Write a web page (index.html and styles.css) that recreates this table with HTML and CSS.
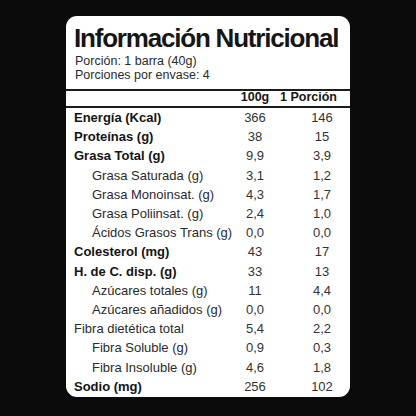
FILE: index.html
```html
<!DOCTYPE html>
<html lang="es">

<head>
    <meta charset="UTF-8">
    <meta name="viewport" content="width=device-width, initial-scale=1.0">
    <title>Información Nutricional</title>
    <link rel="stylesheet" href="styles.css">
</head>

<body>
    <div class="label">
        <div class="head">
            <h1>Información Nutricional</h1>
            <p>Porción: 1 barra (40g)</p>
            <p>Porciones por envase: 4</p>
        </div>
        <table class="facts">
            <colgroup>
                <col class="c-name">
                <col class="c-100">
                <col class="c-por">
            </colgroup>
            <thead>
                <tr>
                    <th></th>
                    <th>100g</th>
                    <th class="por"><span>1 Porción</span></th>
                </tr>
            </thead>
            <tbody>
                <tr class="main"><td>Energía (Kcal)</td><td>366</td><td>146</td></tr>
                <tr class="main"><td>Proteínas (g)</td><td>38</td><td>15</td></tr>
                <tr class="main"><td>Grasa Total (g)</td><td>9,9</td><td>3,9</td></tr>
                <tr class="sub"><td>Grasa Saturada (g)</td><td>3,1</td><td>1,2</td></tr>
                <tr class="sub"><td>Grasa Monoinsat. (g)</td><td>4,3</td><td>1,7</td></tr>
                <tr class="sub"><td>Grasa Poliinsat. (g)</td><td>2,4</td><td>1,0</td></tr>
                <tr class="sub"><td>Ácidos Grasos Trans (g)</td><td>0,0</td><td>0,0</td></tr>
                <tr class="main"><td>Colesterol (mg)</td><td>43</td><td>17</td></tr>
                <tr class="main"><td>H. de C. disp. (g)</td><td>33</td><td>13</td></tr>
                <tr class="sub"><td>Azúcares totales (g)</td><td>11</td><td>4,4</td></tr>
                <tr class="sub"><td>Azúcares añadidos (g)</td><td>0,0</td><td>0,0</td></tr>
                <tr><td>Fibra dietética total</td><td>5,4</td><td>2,2</td></tr>
                <tr class="sub"><td>Fibra Soluble (g)</td><td>0,9</td><td>0,3</td></tr>
                <tr class="sub"><td>Fibra Insoluble (g)</td><td>4,6</td><td>1,8</td></tr>
                <tr class="main"><td>Sodio (mg)</td><td>256</td><td>102</td></tr>
            </tbody>
        </table>
    </div>
</body>

</html>
```

FILE: styles.css
```css
* {
    margin: 0;
    padding: 0;
    box-sizing: border-box;
}

html,
body {
    height: 100%;
}

body {
    background-color: #0b0b0b;
    font-family: "Liberation Sans", Arial, sans-serif;
    padding-top: 16px;
}

.label {
    width: 284px;
    height: 381px;
    margin: 0 auto;
    background-color: #fff;
    border-radius: 11px;
    overflow: hidden;
    color: #2a2a2a;
}

.head {
    padding: 7px 0 7px 8px;
}

.head h1 {
    font-size: 26px;
    line-height: 30px;
    font-weight: bold;
    letter-spacing: -1.2px;
    color: #161616;
}

.head p {
    font-size: 12.5px;
    line-height: 14px;
    padding-left: 1px;
    color: #2a2a2a;
}

.head h1 + p {
    margin-top: 1px;
}

/* table */
.facts {
    width: 100%;
    table-layout: fixed;
    border-collapse: separate;
    border-spacing: 0;
}

.c-name {
    width: 159px;
}

.c-100 {
    width: 60px;
}

.c-por {
    width: 65px;
}

.facts th {
    border-top: 2px solid #1c1c1c;
    border-bottom: 2px solid #1c1c1c;
    font-size: 12.5px;
    line-height: 12px;
    padding: 0 0 3px;
    font-weight: bold;
    color: #161616;
    text-align: center;
    white-space: nowrap;
}

.facts th.por {
    text-align: left;
}

.facts th.por span {
    margin-left: -5px;
}

.facts td {
    font-size: 13px;
    line-height: 19.2px;
    padding: 0;
    text-align: center;
    color: #333;
    white-space: nowrap;
}

.facts td:first-child {
    text-align: left;
    padding-left: 8px;
    color: #2a2a2a;
}

.facts td:last-child {
    padding-left: 9px;
}

.facts tr.main td:first-child {
    font-weight: bold;
    color: #141414;
}

.facts tr.sub td:first-child {
    padding-left: 26px;
}
```
